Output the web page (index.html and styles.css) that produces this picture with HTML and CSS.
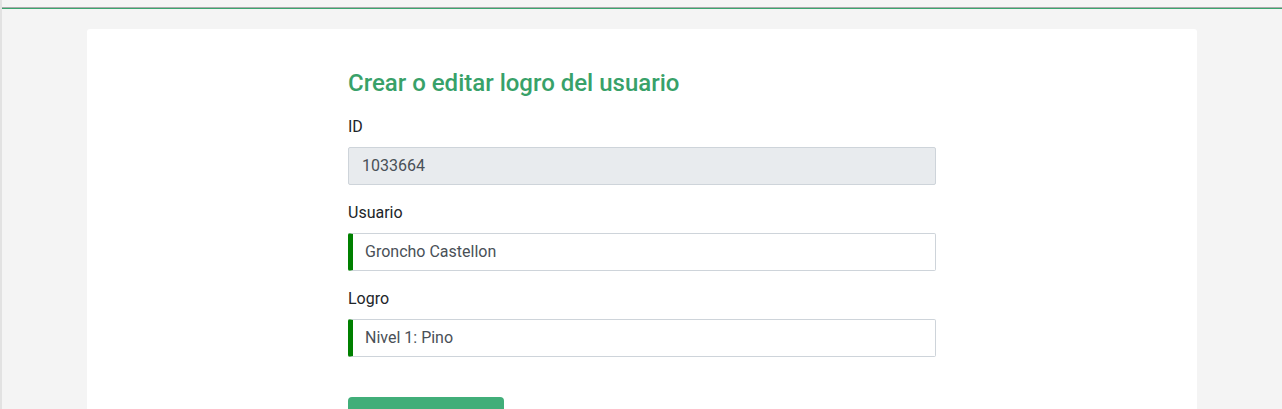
FILE: index.html
```html
<!DOCTYPE html>
<html lang="es">
<head>
<meta charset="utf-8">
<title>Crear o editar logro del usuario</title>
<link rel="stylesheet" href="styles.css">
</head>
<body>
<div class="page">
  <div class="topbar"></div>
  <main class="card">
    <form class="form">
      <h1 class="title">Crear o editar logro del usuario</h1>
      <div class="field">
        <label class="label">ID</label>
        <div class="input input-disabled">1033664</div>
      </div>
      <div class="field">
        <label class="label">Usuario</label>
        <div class="input input-valid">Groncho Castellon</div>
      </div>
      <div class="field">
        <label class="label">Logro</label>
        <div class="input input-valid">Nivel 1: Pino</div>
      </div>
      <button type="button" class="btn">Guardar</button>
    </form>
  </main>
</div>
</body>
</html>
```
FILE: styles.css
```css
* { box-sizing: border-box; }
html, body { margin: 0; padding: 0; height: 100%; }
body {
  background: #f4f4f4;
  font-family: Roboto, "Noto Sans", sans-serif;
  color: #212529;
  overflow: hidden;
}
.page {
  min-height: 100%;
  border-left: 2px solid #e2e2e2;
}
.topbar {
  height: 9px;
  border-bottom: 1px solid #3aa56e;
  box-shadow: 0 -1px 0 #a9a9a9 inset;
  margin-bottom: 20px;
}
.card {
  background: #fff;
  margin: 0 85px 0 85px;
  border-radius: 3px;
  min-height: 400px;
  padding: 38px 0 0 261px;
}
.form {
  width: 588px;
  display: flex;
  flex-direction: column;
}
.title {
  margin: 0 0 18px 0;
  font-size: 24px;
  font-weight: 500;
  color: #38a169;
  line-height: 32px;
}
.field {
  display: flex;
  flex-direction: column;
  margin-bottom: 18px;
}
.label {
  font-size: 16px;
  line-height: 20px;
  margin-bottom: 10px;
  color: #212529;
}
.input {
  height: 38px;
  border: 1px solid #ced4da;
  border-radius: 2px;
  font-size: 16px;
  line-height: 36px;
  color: #495057;
  padding-left: 13px;
  background: #fff;
}
.input-disabled {
  background: #e8ebee;
}
.input-valid {
  border-left: 5px solid #008000;
  padding-left: 12px;
}
.btn {
  align-self: flex-start;
  margin-top: 22px;
  width: 156px;
  height: 44px;
  border: none;
  border-radius: 4px;
  background: #41ae79;
  color: #fff;
  font-family: Roboto, sans-serif;
  font-size: 16px;
}
```
